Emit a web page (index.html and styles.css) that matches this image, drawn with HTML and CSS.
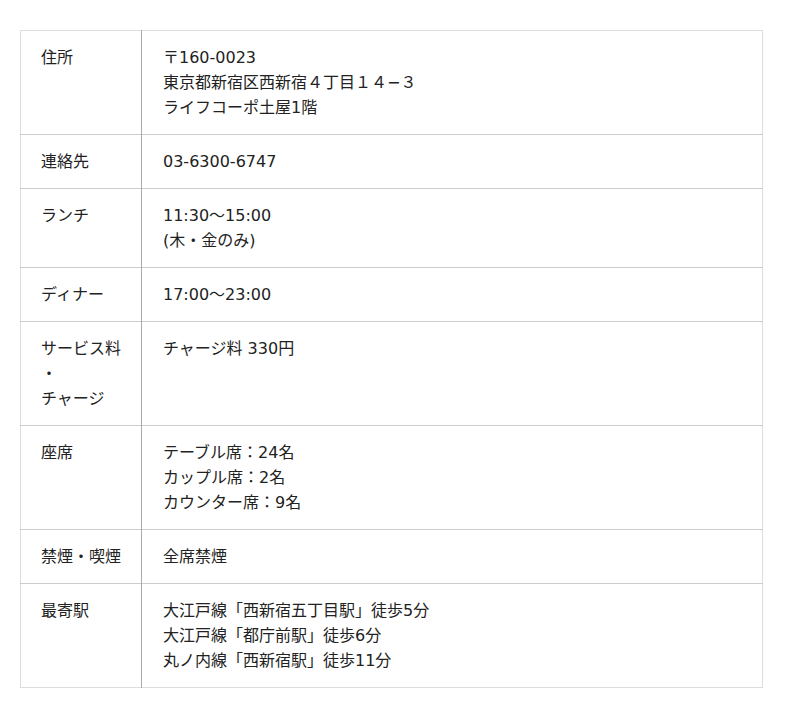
FILE: index.html
```html
<!DOCTYPE html>
<html lang="ja">
<head>
<meta charset="utf-8">
<link rel="stylesheet" href="styles.css">
</head>
<body>
<div class="wrap">
<table class="info">
<tr><th>住所</th><td>〒160-0023<br>東京都新宿区西新宿４丁目１４−３<br>ライフコーポ土屋1階</td></tr>
<tr><th>連絡先</th><td>03-6300-6747</td></tr>
<tr><th>ランチ</th><td>11:30〜15:00<br>(木・金のみ)</td></tr>
<tr><th>ディナー</th><td>17:00〜23:00</td></tr>
<tr><th>サービス料<br>・<br>チャージ</th><td>チャージ料 330円</td></tr>
<tr><th>座席</th><td>テーブル席：24名<br>カップル席：2名<br>カウンター席：9名</td></tr>
<tr><th>禁煙・喫煙</th><td>全席禁煙</td></tr>
<tr><th>最寄駅</th><td>大江戸線「西新宿五丁目駅」徒歩5分<br>大江戸線「都庁前駅」徒歩6分<br>丸ノ内線「西新宿駅」徒歩11分</td></tr>
</table>
</div>
</body>
</html>
```
FILE: styles.css
```css
html, body {
  margin: 0;
  padding: 0;
  background: #fff;
}
.wrap {
  padding: 30px 0 0 20px;
}
.info {
  width: 743px;
  border-collapse: collapse;
  border: 1px solid #ddd;
  font-family: "DejaVu Sans", "Noto Sans CJK JP", sans-serif;
  font-size: 16px;
  line-height: 25px;
  color: #222;
}
.info tr {
  border-bottom: 1px solid #ccc;
}
.info tr:last-child {
  border-bottom: 1px solid #ddd;
}
.info th {
  width: 80px;
  text-align: left;
  font-weight: normal;
  vertical-align: top;
  padding: 14px 20px;
  border-right: 1px solid #aaa;
}
.info td {
  vertical-align: top;
  padding: 14px 21px;
}
```
